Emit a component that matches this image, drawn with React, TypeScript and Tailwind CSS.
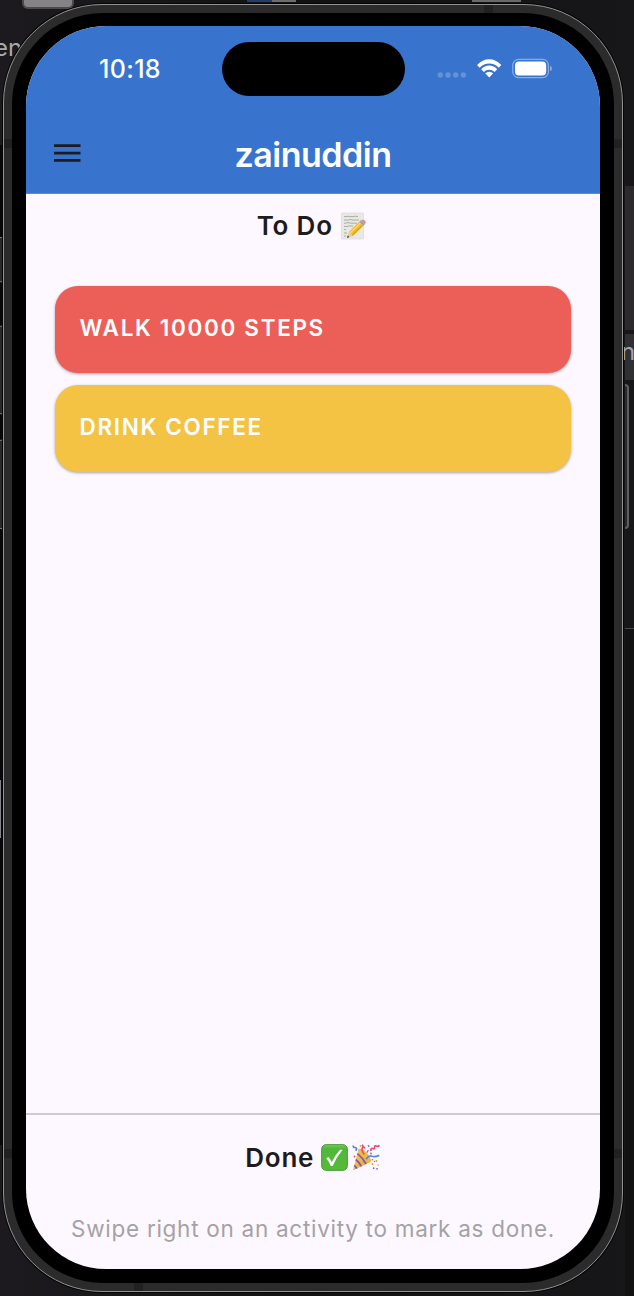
import React from "react";

function MemoIcon() {
  return (
    <svg className="h-7 w-[27px]" viewBox="0 0 27 28" fill="none">
      <rect x="1.5" y="1" width="22" height="26" rx="0.6" fill="#e8e8e5" stroke="#dadad8" strokeWidth="0.7" />
      <path
        d="M4 4.600h3l1-.6 1 .6h5l1-.5 3 .6M4 8h5l1-.6 2 .6h7M4 11.200h2l1-.6 5 .6h5M4 14.400h4l1-.6 4 .4M4 17.600h2M4 21h3M4 24h2"
        stroke="#9b9b99"
        strokeWidth="0.8"
      />
      <path d="M7 26 9 19.800 13 23.900Z" fill="#e9c9a0" />
      <path d="M7 26 7.800 23.600 9.300 25.100Z" fill="#333" />
      <path d="M9 19.800 19.200 9.800 23.200 13.900 13 23.900Z" fill="#f3b92c" />
      <path d="M10.200 21 20.400 11" stroke="#ffdb63" strokeWidth="1.400" />
      <path d="M12.400 23.200 22.500 13.300" stroke="#c98a1a" strokeWidth="0.900" />
      <path d="M19.200 9.800 20.900 8.200 24.900 12.300 23.200 13.900Z" fill="#9aa7ad" />
      <path d="M20.900 8.200Q23 7 25 8.800 26.700 10.700 24.900 12.300Z" fill="#ee8389" />
    </svg>
  );
}

function CheckIcon() {
  return (
    <svg className="size-[27px]" viewBox="0 0 27 27" fill="none">
      <defs>
        <linearGradient id="leaf" x1="0" y1="0" x2="0" y2="1">
          <stop offset="0" stopColor="#7ccb58" />
          <stop offset="0.15" stopColor="#50b83a" />
          <stop offset="1" stopColor="#55bb38" />
        </linearGradient>
      </defs>
      <rect x="0.6" y="0.6" width="25.8" height="25.8" rx="4.6" fill="url(#leaf)" stroke="#46953a" strokeWidth="0.9" />
      <path d="M5.200 14.300 7.400 13q2 2.200 3.400 5.100 3.500-7.300 8.500-12.600l2.200.600Q15.200 13.600 11.700 22h-1.900Q8 17.500 5.200 14.300Z" fill="#fff" />
    </svg>
  );
}

function PartyIcon() {
  return (
    <svg className="size-7" viewBox="0 0 28 28" fill="none">
      <defs>
        <linearGradient id="cone" x1="0" y1="0" x2="1" y2="1">
          <stop offset="0" stopColor="#f8d873" />
          <stop offset="1" stopColor="#d99c24" />
        </linearGradient>
      </defs>
      <path d="M0.900 26.600 6.500 5Q12.500 7.500 18.700 17.800Z" fill="url(#cone)" />
      <ellipse cx="12.600" cy="11.500" rx="3.500" ry="8.700" transform="rotate(-42 12.600 11.500)" fill="#edbb42" />
      <path d="M5.400 9.600Q10.500 13.500 14 20M3.800 15.500Q7.500 18.500 9.300 22.300M2.300 21.300Q4 22.800 4.800 24.700" stroke="#8b50b4" strokeWidth="1.700" />
      <path d="M11 2.500Q8.500 5.500 12.200 10.500M10 .800 13 4.400" stroke="#e8486b" strokeWidth="1.500" />
      <path d="M19 7q-.500-3 1.500-2.500 2.200 1 2-.800 0-2.700 1.800-1.600 1.700.9 3.100-.800" stroke="#e64c72" strokeWidth="1.700" />
      <path d="M14 15.200Q17 10.800 20 12.300 23.500 13.300 27.200 11.200" stroke="#5189e2" strokeWidth="1.700" />
      <path d="M1.200 1.500Q.800 3.700 3.500 3.500 5.600 4 3.700 6.800" stroke="#557edc" strokeWidth="1.600" />
      <path d="m16 2.500 1.300-.900" stroke="#5189e2" strokeWidth="1.800" />
      <path d="M14.800 8.500q1-1 1.500-2.400" stroke="#9b5bc0" strokeWidth="1.300" />
      <g fill="#e9a03b"><circle cx="8.500" cy="2" r=".9" /><circle cx="24.500" cy="17" r="1" /><circle cx="20.500" cy="20" r="1" /><circle cx="26.200" cy="21" r=".8" /></g>
      <g fill="#7b65cf"><circle cx="19" cy="9.500" r=".9" /><circle cx="21.700" cy="24.200" r=".9" /><circle cx="25" cy="24.800" r=".9" /></g>
      <g fill="#e0526a"><circle cx="2.500" cy="12.500" r=".9" /><circle cx="22.500" cy="17.500" r=".7" /><circle cx="20.500" cy="15.700" r=".8" /></g>
    </svg>
  );
}

function StatusIcons() {
  return (
    <svg className="h-6 w-[116px]" viewBox="0 0 116 24" fill="none">
      <g fill="#fff" fillOpacity="0.22">
        <circle cx="3.300" cy="18" r="2.700" /><circle cx="11" cy="18" r="2.700" /><circle cx="18.700" cy="18" r="2.700" /><circle cx="26.400" cy="18" r="2.700" />
      </g>
      <g fill="#fff">
        <path d="M40.100 8Q45.500 2.200 52.200 2.200T64.300 8L61.800 10.700Q57.500 6.500 52.200 6.500T42.600 10.700Z" />
        <path d="M44.200 12.200Q47.700 8.600 52.200 8.600T60.200 12.200L57.600 14.900Q55.300 12.700 52.200 12.700T46.800 14.900Z" />
        <path d="M48.200 16.300Q50 14.700 52.200 14.700T56.200 16.300L52.200 20.600Z" />
      </g>
      <rect x="75.800" y="2.400" width="35.600" height="18.200" rx="5.700" stroke="#fff" strokeOpacity="0.42" strokeWidth="1.200" />
      <rect x="78" y="4.600" width="31.200" height="13.800" rx="3.900" fill="#fff" />
      <path d="M113.100 8.800Q114.900 9.500 114.900 11.500T113.100 14.200Z" fill="#fff" fillOpacity="0.45" />
    </svg>
  );
}

function MenuIcon() {
  return (
    <svg className="h-[19px] w-[27px]" viewBox="0 0 27 19">
      <path d="M0 .300h26.500v2.700H0zM0 7.700h26.500v2.700H0zM0 15.100h26.500v2.700H0z" fill="#1d1b20" />
    </svg>
  );
}

function DesktopBehind() {
  return (
    <div className="absolute inset-0 flex flex-col overflow-hidden bg-gradient-to-r from-[#1c1a1e] via-[#111112] to-[#171618]">
      <div className="flex h-[33px] shrink-0 items-start pl-[22px]">
        <div className="h-[9px] w-[52px] rounded-b-md border-2 border-t-0 border-[#4b4b4c] bg-[#858386]" />
        <div className="ml-[173px] h-[2px] w-[49px] bg-gradient-to-r from-[#243e67] from-50% to-[#6d6d70] to-50%" />
        <div className="ml-[176px] h-[2px] w-[49px] bg-[#69696b]" />
      </div>
      <div className="flex h-[1263px] items-start justify-between">
        <div className="flex w-9 flex-col">
          <span className="-ml-[6px] h-[112px] text-[24px] leading-[30px] text-[#aaa8aa]">en</span>
          <div className="flex h-[1000px] w-1 flex-col bg-[#06060b] pt-[92px]">
            <div className="flex h-[292px] flex-col border-y border-[#777] bg-[#29292a] pt-[43px]">
              <div className="h-[46px] w-[4px] rounded-r-sm border border-l-0 border-[#777] bg-[#08080a]" />
              <div className="mt-[86px] h-[28px] w-[4px] rounded-r-sm border border-l-0 border-[#777] bg-[#08080a]" />
            </div>
            <div className="mt-[251px] h-[58px] w-px bg-[#81858b]" />
          </div>
        </div>
        <div className="flex w-[9px] flex-col pt-[153px]">
          <div className="h-[144px] bg-[#2c2a2d]" />
          <div className="mt-1 h-[46px] bg-[#302f31]">
            <span className="-ml-1 text-[24px] leading-[36px] text-[#a7a6a8]">n</span>
          </div>
          <div className="mt-1 h-[145px] w-[4px] rounded-r-sm border-2 border-l-0 border-[#5e5e5e] bg-[#292929]" />
          <div className="mt-[99px] h-[668px] border-t border-[#4a494b] bg-[#121213]" />
        </div>
      </div>
    </div>
  );
}

function Activity({ name, color }: { name: string; color: string }) {
  return (
    <li
      className={`flex h-[87px] items-start rounded-[23px] pt-[27px] pl-[24.5px] text-[22.5px] leading-[30px] font-semibold tracking-[1.66px] text-white shadow-[0_1px_3px_rgba(0,0,0,0.35)] ${color}`}
    >
      {name}
    </li>
  );
}

function Seams() {
  return (
    <svg className="absolute inset-0 h-[1286px] w-[618px]" viewBox="0 0 618 1286">
      <path d="M0 134h8v9H0zM610 134h8v9h-8zM0 1144h8v9H0zM610 1144h8v9h-8zM480 0h9v8h-9zM130 1278h9v8h-9z" fill="#212121" />
    </svg>
  );
}

export default function App() {
  return (
    <div className="relative h-[1296px] w-[634px] overflow-hidden pt-1 pl-[3px] font-['Inter','Liberation_Sans',sans-serif]">
      <DesktopBehind />
      <div className="relative h-[1288px] w-[620px] rounded-[99px] border border-[#929292] bg-[#2b2b2b] p-2 shadow-[0_0_0_1px_#050505]">
        <Seams />
        <div className="relative h-[1270px] w-[602px] rounded-[91px] bg-black px-[14px] pt-[13px] pb-[14px]">
          <main className="flex h-[1243px] w-[574px] flex-col overflow-hidden rounded-[80px] bg-[#fdf8ff] text-[#1d1b20]">
            <header className="h-[168px] shrink-0 border-b border-[#5b8dd7] bg-[#3874cd] text-white">
              <div className="flex h-[86px] items-start pt-4">
                <time className="w-[195.5px] pt-[12px] pl-[73px] text-[25px] leading-[30px] font-medium tracking-[0.35px]">10:18</time>
                <div className="h-[54px] w-[183px] rounded-full bg-black" />
                <div className="pt-[15px] pl-[32.5px]"><StatusIcons /></div>
              </div>
              <div className="grid h-[82px] grid-cols-[64px_1fr_64px] items-center">
                <button aria-label="Menu" className="pl-[27.5px]"><MenuIcon /></button>
                <h1 className="pt-[3px] text-center text-[34px] leading-10 font-semibold tracking-[-0.5px]">zainuddin</h1>
              </div>
            </header>
            <section className="flex-1">
              <h2 className="flex h-[63px] items-center justify-center gap-[7.5px] pr-[2px] text-[26px] font-semibold tracking-[0.8px]">
                To Do <MemoIcon />
              </h2>
              <ul className="mt-[29px] flex flex-col gap-3 px-[29px]">
                <Activity name="WALK 10000 STEPS" color="bg-[#ec5f59]" />
                <Activity name="DRINK COFFEE" color="bg-[#f4c344]" />
              </ul>
            </section>
            <section className="h-[156px] shrink-0 border-t-2 border-[#cfc9d3]">
              <h2 className="flex h-[85px] items-center justify-center pr-px text-[26px] font-semibold tracking-[0.8px]">
                Done <span className="ml-[6.5px] flex gap-1"><CheckIcon /><PartyIcon /></span>
              </h2>
              <p className="pt-[14px] text-center text-[22.5px] leading-[30px] tracking-[0.72px] text-[#a4a2a5]">
                Swipe right on an activity to mark as done.
              </p>
            </section>
          </main>
        </div>
      </div>
    </div>
  );
}
